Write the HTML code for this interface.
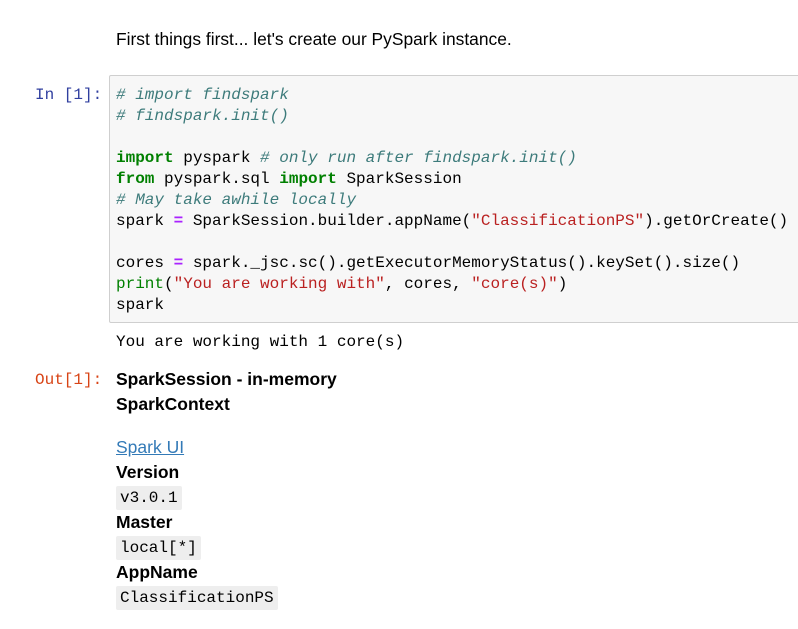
<!DOCTYPE html>
<html><head><meta charset="utf-8"><style>
body{margin:0;background:#fff;width:798px;height:629px;overflow:hidden;position:relative;font-family:"Liberation Sans",sans-serif;color:#000}
.a{position:absolute;white-space:pre}
.mono{font-family:"Liberation Mono",monospace;font-size:16px}
.box{position:absolute;left:109px;top:75px;width:700px;height:246px;background:#f7f7f7;border:1px solid #cfcfcf;border-radius:2px}
.code{position:absolute;left:116px;top:85px;line-height:21px;white-space:pre;font-family:"Liberation Mono",monospace;font-size:16px;color:#000}
.c{color:#3d7b7b;font-style:italic}.k{color:#008000;font-weight:bold}.o{color:#aa22ff;font-weight:bold}.s{color:#ba2121}.b{color:#008000}
.bold{font-weight:bold;font-size:17.5px}
.pill{position:absolute;left:116px;background:#eee;border-radius:2px;padding:1px 4px;font-family:"Liberation Mono",monospace;font-size:16px;line-height:22px}
</style></head><body>
<div class="a" style="left:116px;top:29px;font-size:17.4px">First things first... let's create our PySpark instance.</div>
<div class="a mono" style="left:35px;top:85px;line-height:21px;color:#303f9f">In [1]:</div>
<div class="box"></div>
<div class="code"><span class="c"># import findspark</span>
<span class="c"># findspark.init()</span>

<span class="k">import</span> pyspark <span class="c"># only run after findspark.init()</span>
<span class="k">from</span> pyspark.sql <span class="k">import</span> SparkSession
<span class="c"># May take awhile locally</span>
spark <span class="o">=</span> SparkSession.builder.appName(<span class="s">"ClassificationPS"</span>).getOrCreate()

cores <span class="o">=</span> spark._jsc.sc().getExecutorMemoryStatus().keySet().size()
<span class="b">print</span>(<span class="s">"You are working with"</span>, cores, <span class="s">"core(s)"</span>)
spark</div>
<div class="a mono" style="left:116px;top:332px;line-height:21px">You are working with 1 core(s)</div>
<div class="a mono" style="left:35px;top:370px;line-height:21px;color:#d84315">Out[1]:</div>
<div class="a bold" style="left:116px;top:369px">SparkSession - in-memory</div>
<div class="a bold" style="left:116px;top:394px">SparkContext</div>
<div class="a" style="left:116px;top:437px;font-size:17.5px;color:#337ab7;text-decoration:underline">Spark UI</div>
<div class="a bold" style="left:116px;top:462px">Version</div>
<div class="pill" style="top:486px">v3.0.1</div>
<div class="a bold" style="left:116px;top:512px">Master</div>
<div class="pill" style="top:536px">local[*]</div>
<div class="a bold" style="left:116px;top:562px">AppName</div>
<div class="pill" style="top:586px">ClassificationPS</div>
</body></html>
